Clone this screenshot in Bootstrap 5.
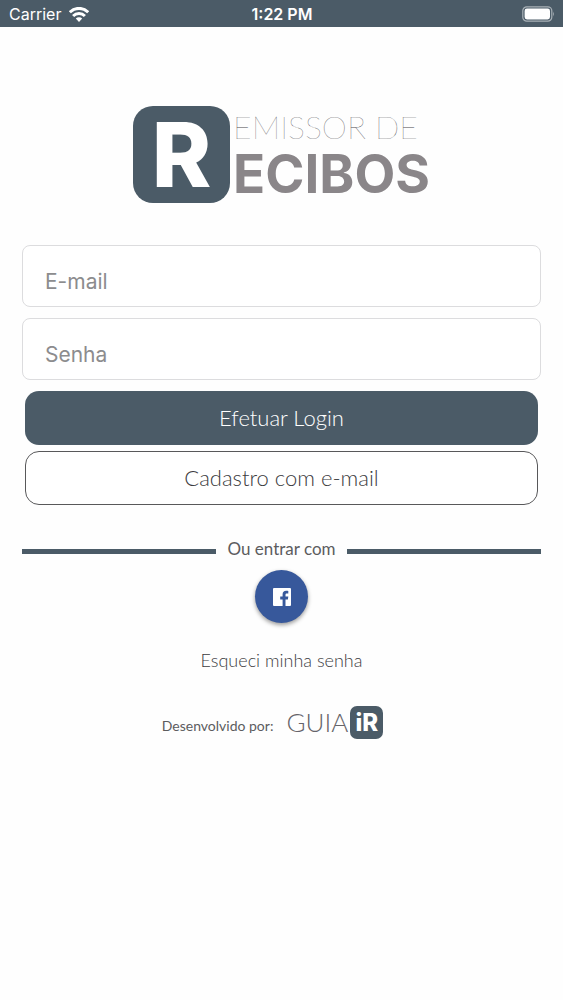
<!DOCTYPE html>
<html lang="pt-BR">
<head>
<meta charset="utf-8">
<meta name="viewport" content="width=device-width, initial-scale=1">
<title>Emissor de Recibos</title>
<link href="https://cdn.jsdelivr.net/npm/bootstrap@5.3.0/dist/css/bootstrap.min.css" rel="stylesheet">
<style>
  :root { --slate: #4b5b67; --ink: #5c5c5e; --grey: #8a8689; }
  body { background: #fefefe; color: var(--ink); font-family: Lato, "Liberation Sans", sans-serif; }
  .statusbar { background: var(--slate); color: #fff; height: 27px; padding: 1px 8px 0 9px; font: 16px/24px Inter, sans-serif; }
  .statusbar > * { flex: 1 1 0; }
  .clock { font-weight: 600; }
  .page { padding: 79px 22px 24px; }
  .logo { height: 97px; margin-bottom: 42px; gap: 3px; }
  .logo-tile { width: 97px; height: 97px; border-radius: 20px; background: var(--slate); color: #fff; font: 800 90px/97px Inter, sans-serif; }
  .logo-top { font-size: 32px; line-height: 42px; font-weight: 100; color: #4c4a4e; white-space: nowrap; }
  .logo-bottom { font: 700 53px/52px Inter, sans-serif; color: var(--grey); }
  .field { height: 62px; border: 1px solid #dcdcde; border-radius: 8px; padding: 10px 22px 0; font: 21px/32px Inter, sans-serif; margin-bottom: 11px; background: #fff; }
  .field::placeholder { color: #8c8c8e; opacity: 1; }
  .actions { padding: 0 3px; gap: 6px; }
  .action { height: 54px; border-radius: 14px; font-size: 22px; line-height: 30px; padding: 0; font-weight: 300; }
  .action-main { --bs-btn-bg: var(--slate); --bs-btn-color: #fff; --bs-btn-hover-bg: #3f4d58; --bs-btn-hover-color: #fff; }
  .action-alt { --bs-btn-color: #3c3c3e; --bs-btn-border-color: #58585a; --bs-btn-bg: #fff; --bs-btn-hover-color: #333; }
  .divider { margin-top: 32px; gap: 11px; font-size: 17px; line-height: 24px; }
  .rule { height: 5px; background: var(--slate); margin-top: 4px; }
  .facebook { width: 53px; height: 53px; margin-top: 9px; background: #37589b; box-shadow: 0 2px 4px rgba(0,0,0,.4); }
  .forgot { margin-top: 25px; font-size: 18px; line-height: 24px; color: #3c3c3e; font-weight: 300; }
  .credit { margin-top: 34px; font-size: 14px; line-height: 32px; padding-right: 18px; gap: 13px; }
  .guia { font-size: 26px; font-weight: 300; color: #66646a; gap: 2px; }
  .guia-tile { width: 33px; height: 33px; border-radius: 7px; background: var(--slate); color: #fff; font: 800 24px/33px Inter, sans-serif; }
</style>
</head>
<body>
<header class="statusbar d-flex align-items-center">
  <div class="d-flex align-items-center gap-2">
    <span>Carrier</span>
    <svg width="20" height="15" viewBox="0 0 20 15" fill="none" stroke="#fff" stroke-width="3" aria-label="Wi-Fi"><path d="M.8 5.200a13 13 0 0 1 18.400 0M4.100 9a8.200 8.200 0 0 1 11.800 0"/><path d="M10 15l-3.200-3.400a4.500 4.500 0 0 1 6.400 0z" fill="#fff" stroke="none"/></svg>
  </div>
  <div class="clock text-center">1:22 PM</div>
  <div class="d-flex justify-content-end">
    <svg width="33" height="16" viewBox="0 0 33 16" aria-label="Bateria"><rect x=".8" y=".8" width="29" height="14.4" rx="4" fill="none" stroke="#a9b1b7" stroke-width="1.2"/><rect x="2.600" y="2.600" width="25.400" height="10.800" rx="2.400" fill="#fff"/><path d="M31 5.500q1.800 2.500 0 5z" fill="#a9b1b7"/></svg>
  </div>
</header>

<main class="page">
  <h1 class="logo d-flex justify-content-center">
    <span class="logo-tile text-center">R</span>
    <span class="d-flex flex-column">
      <span class="logo-top">EMISSOR DE</span>
      <span class="logo-bottom">ECIBOS</span>
    </span>
  </h1>

  <form>
    <input class="form-control field" type="email" id="email" placeholder="E-mail" aria-label="E-mail">
    <input class="form-control field" type="password" id="senha" placeholder="Senha" aria-label="Senha">
    <div class="actions d-grid">
      <button class="btn action action-main" type="submit">Efetuar Login</button>
      <button class="btn action action-alt" type="button">Cadastro com e-mail</button>
    </div>
  </form>

  <div class="divider d-flex align-items-center">
    <div class="rule flex-fill"></div>
    <span>Ou entrar com</span>
    <div class="rule flex-fill"></div>
  </div>

  <div class="d-flex flex-column align-items-center">
    <button class="facebook btn border-0 rounded-circle p-0 d-flex align-items-center justify-content-center" type="button" aria-label="Entrar com Facebook">
      <svg width="18" height="18" viewBox="0 0 18 18" fill="#fff"><path d="M1 0h16a1 1 0 0 1 1 1v16a1 1 0 0 1-1 1h-4.500v-6.600h2.400l.4-2.800h-2.800V6.900c0-.9.400-1.400 1.400-1.400H15.300V3c-.4-.1-1.200-.2-2.200-.2-2.200 0-3.500 1.300-3.500 3.600v2.200H7.200v2.800h2.400V18H1a1 1 0 0 1-1-1V1a1 1 0 0 1 1-1z"/></svg>
    </button>
    <a class="forgot text-decoration-none" href="#">Esqueci minha senha</a>
  </div>

  <footer class="credit d-flex justify-content-center">
    <span class="pt-1">Desenvolvido por:</span>
    <span class="guia d-flex"><span>GUIA</span><span class="guia-tile text-center">iR</span></span>
  </footer>
</main>
<script src="https://cdn.jsdelivr.net/npm/bootstrap@5.3.0/dist/js/bootstrap.bundle.min.js"></script>
</body>
</html>
